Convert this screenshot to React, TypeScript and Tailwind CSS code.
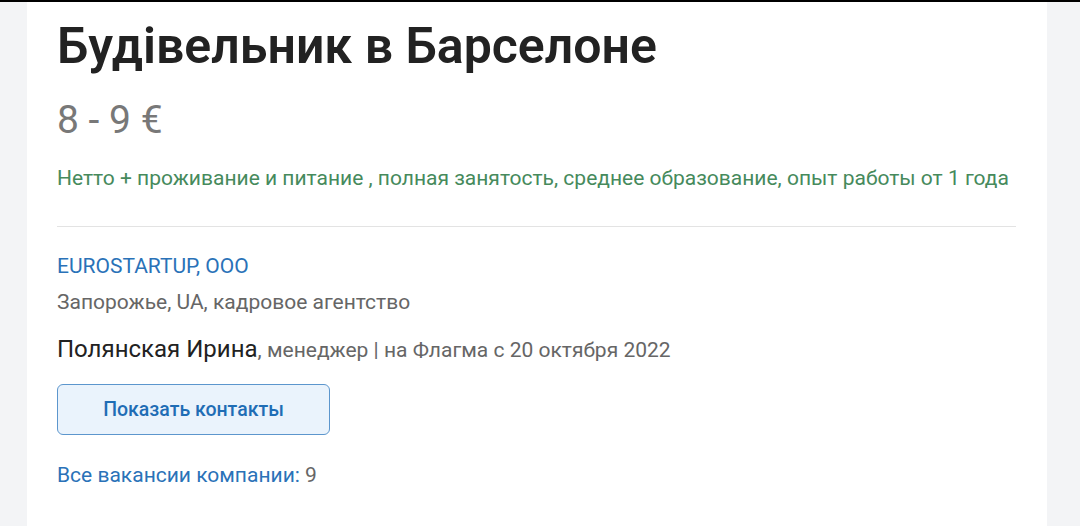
export default function App() {
  return (
    <div className="min-h-screen bg-[#f3f4f6] border-t-2 border-black font-['Roboto',sans-serif]">
      <div className="ml-[27px] w-[1020px] min-h-[524px] bg-white pl-[30px] pr-[31px] pt-[16px]">
        <h1 className="text-[50px] leading-[56px] font-semibold text-[#222222]">Будівельник в Барселоне</h1>

        <p className="mt-[24px] text-[39px] leading-[44px] text-[#787878]">8 - 9 €</p>

        <p className="mt-[22px] text-[21px] leading-[28px] text-[#468a5c]">
          Нетто + проживание и питание , полная занятость, среднее образование, опыт работы от 1 года
        </p>

        <div className="mt-[34px] border-t border-[#e3e3e3]" />

        <a className="mt-[26px] block text-[21px] leading-[26px] text-[#2a72b8]">EUROSTARTUP, OOO</a>
        <p className="mt-[10px] text-[21px] leading-[26px] text-[#666666]">Запорожье, UA, кадровое агентство</p>

        <p className="mt-[19px] text-[21px] leading-[30px] text-[#666666]">
          <span className="text-[24px] text-[#222222]">Полянская Ирина</span>, менеджер | на Флагма с 20 октября 2022
        </p>

        <button
          type="button"
          className="mt-[19px] flex h-[51px] w-[273px] items-center justify-center rounded-[6px] border border-[#5c96cd] bg-[#eaf3fc] text-[19.5px] font-medium text-[#1f6db5]"
        >
          Показать контакты
        </button>

        <p className="mt-[27px] text-[21px] leading-[26px] text-[#2a72b8]">
          Все вакансии компании: <span className="text-[#666666]">9</span>
        </p>
      </div>
    </div>
  );
}
